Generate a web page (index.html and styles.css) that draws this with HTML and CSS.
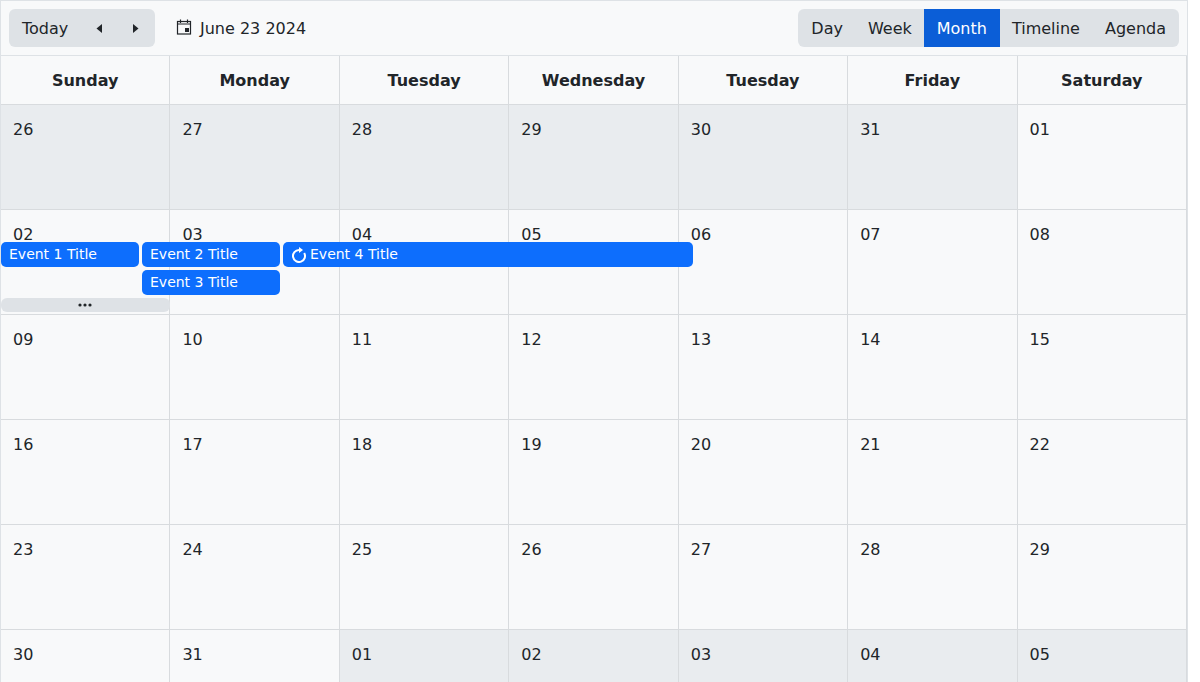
FILE: index.html
```html
<!DOCTYPE html>
<html lang="en">

<head>
    <meta charset="UTF-8">
    <meta name="viewport" content="width=device-width, initial-scale=1.0">
    <title>Calendar</title>
    <link rel="stylesheet" href="styles.css">
</head>

<body>
    <div class="calendar">
        <div class="toolbar">
            <div class="nav-group">
                <span class="btn">Today</span>
                <span class="btn arrow">
                    <svg width="7" height="9" viewBox="0 0 7 9"><path d="M6 0v9L0.5 4.5z" fill="#212529"/></svg>
                </span>
                <span class="btn arrow">
                    <svg width="7" height="9" viewBox="0 0 7 9"><path d="M1 0v9l5.500-4.500z" fill="#212529"/></svg>
                </span>
            </div>
            <div class="current-date">
                <svg width="16" height="16" viewBox="0 0 16 16" fill="none" stroke="#212529" stroke-width="1.2">
                    <rect x="1.500" y="2.500" width="13" height="12.500"/>
                    <path d="M1.500 5h13M4.500 0.500v3.500M11.500 0.500v3.500"/>
                    <rect x="9" y="9" width="4" height="4" fill="#212529" stroke="none"/>
                </svg>
                <span>June 23 2024</span>
            </div>
            <div class="view-group">
                <span class="btn">Day</span>
                <span class="btn">Week</span>
                <span class="btn active">Month</span>
                <span class="btn">Timeline</span>
                <span class="btn">Agenda</span>
            </div>
        </div>

        <div class="month">
            <div class="head">Sunday</div>
            <div class="head">Monday</div>
            <div class="head">Tuesday</div>
            <div class="head">Wednesday</div>
            <div class="head">Tuesday</div>
            <div class="head">Friday</div>
            <div class="head">Saturday</div>

            <div class="day off">26</div>
            <div class="day off">27</div>
            <div class="day off">28</div>
            <div class="day off">29</div>
            <div class="day off">30</div>
            <div class="day off">31</div>
            <div class="day">01</div>

            <div class="day">02</div>
            <div class="day">03</div>
            <div class="day">04</div>
            <div class="day">05</div>
            <div class="day">06</div>
            <div class="day">07</div>
            <div class="day">08</div>

            <div class="day">09</div>
            <div class="day">10</div>
            <div class="day">11</div>
            <div class="day">12</div>
            <div class="day">13</div>
            <div class="day">14</div>
            <div class="day">15</div>

            <div class="day">16</div>
            <div class="day">17</div>
            <div class="day">18</div>
            <div class="day">19</div>
            <div class="day">20</div>
            <div class="day">21</div>
            <div class="day">22</div>

            <div class="day">23</div>
            <div class="day">24</div>
            <div class="day">25</div>
            <div class="day">26</div>
            <div class="day">27</div>
            <div class="day">28</div>
            <div class="day">29</div>

            <div class="day">30</div>
            <div class="day">31</div>
            <div class="day off">01</div>
            <div class="day off">02</div>
            <div class="day off">03</div>
            <div class="day off">04</div>
            <div class="day off">05</div>

            <div class="event event-1">Event 1 Title</div>
            <div class="event event-2">Event 2 Title</div>
            <div class="event event-3">Event 3 Title</div>
            <div class="event event-4">
                <svg width="16" height="16" viewBox="0 0 16 16">
                    <path d="M8 3A6 6 0 1 0 13.200 6" fill="none" stroke="#fff" stroke-width="2"/>
                    <path d="M8 0v6l4-3z" fill="#fff"/>
                </svg>
                <span>Event 4 Title</span>
            </div>
            <div class="more">
                <svg width="14" height="4" viewBox="0 0 14 4" fill="#212529">
                    <circle cx="2" cy="2" r="1.600"/>
                    <circle cx="7" cy="2" r="1.600"/>
                    <circle cx="12" cy="2" r="1.600"/>
                </svg>
            </div>
        </div>
    </div>
</body>

</html>
```

FILE: styles.css
```css
* {
    margin: 0;
    padding: 0;
    box-sizing: border-box;
}

html,
body {
    height: 682px;
    overflow: hidden;
    background-color: #fff;
}

body {
    font-family: "DejaVu Sans", sans-serif;
    font-size: 16px;
    color: #212529;
}

.calendar {
    width: 1188px;
    height: 682px;
    overflow: hidden;
    background-color: #f8f9fa;
    border-top: 1px solid #dee2e6;
    border-left: 1px solid #dee2e6;
    border-right: 1px solid #dee2e6;
}

.toolbar {
    display: flex;
    align-items: center;
    height: 54px;
    padding: 0 8px;
}

.nav-group,
.view-group {
    display: flex;
    height: 38px;
    background-color: #dee2e6;
    border-radius: 6px;
    overflow: hidden;
}

.btn {
    display: flex;
    align-items: center;
    padding: 2px 13px 0;
    line-height: 24px;
}

.view-group .btn + .btn {
    margin-left: -1px;
}

.arrow {
    padding: 0;
    width: 37px;
    justify-content: center;
}

.arrow + .arrow {
    margin-left: -1px;
}

.nav-group .btn:first-child {
    width: 72px;
}

.nav-group {
    width: 146px;
}

.active {
    background-color: #0b5ed7;
    color: #fff;
}

.current-date {
    display: flex;
    align-items: center;
    gap: 8px;
    margin-left: 21px;
    padding-top: 1px;
}

.current-date svg {
    margin-bottom: 3px;
}

.view-group {
    margin-left: auto;
}

.month {
    position: relative;
    display: grid;
    grid-template-columns: repeat(7, 1fr);
    grid-template-rows: 49px repeat(6, 105px);
    border-top: 1px solid #dee2e6;
}

.head {
    display: flex;
    align-items: center;
    justify-content: center;
    font-weight: 700;
    border-right: 1px solid #d8dbde;
    border-bottom: 1px solid #d8dbde;
}

.day {
    padding: 13px 12px 0;
    line-height: 24px;
    border-right: 1px solid #d8dbde;
    border-bottom: 1px solid #d8dbde;
}

.off {
    background-color: #e9ecef;
}

/* events lie over the day cells */
.event {
    position: absolute;
    display: flex;
    align-items: center;
    gap: 3px;
    height: 25px;
    padding: 0 8px 2px;
    border-radius: 5px;
    background-color: #0d6efd;
    color: #fff;
    font-size: 14px;
}

.event svg {
    margin-top: 2px;
}

.event-1 {
    left: 0;
    top: 186px;
    width: 138px;
}

.event-2 {
    left: 141px;
    top: 186px;
    width: 138px;
}

.event-3 {
    left: 141px;
    top: 214px;
    width: 138px;
}

.event-4 {
    left: 282px;
    top: 186px;
    width: 410px;
}

.more {
    position: absolute;
    left: 0;
    top: 242px;
    width: 169px;
    height: 14px;
    display: flex;
    align-items: center;
    justify-content: center;
    padding-right: 2px;
    border-radius: 6px;
    background-color: #dee2e6;
}
```
